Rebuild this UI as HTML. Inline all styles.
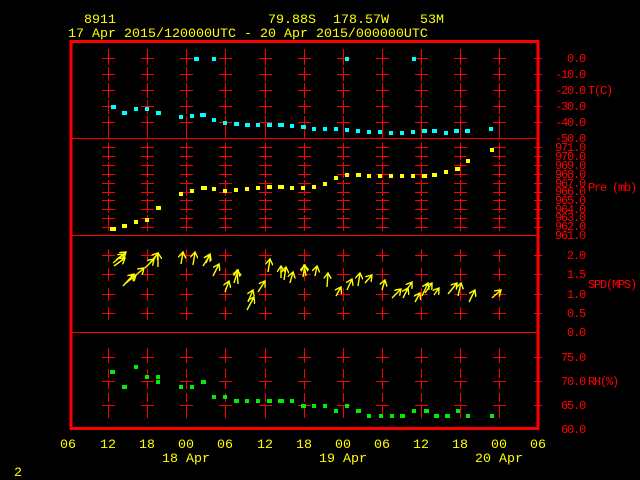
<!DOCTYPE html>
<html><head><meta charset="utf-8"><style>
html,body{margin:0;padding:0;background:#000;width:640px;height:480px;overflow:hidden}
svg{display:block}
text{font-family:"Liberation Mono","DejaVu Sans Mono",monospace}
.t{font-size:13.33px;fill:#ffff00}
.r{font-size:12px;fill:#ff0000;letter-spacing:-1.2px}
</style></head><body>
<svg width="640" height="480" viewBox="0 0 640 480" xmlns="http://www.w3.org/2000/svg">
<defs>
<g id="c1" stroke="#ff0000" stroke-width="1" shape-rendering="crispEdges">
<path d="M0.5 49V65M0.5 67V81M0.5 83V98M0.5 100V114M0.5 116V138"/>
<path d="M-6 58.5H7M-6 74.5H7M-6 90.5H7M-6 106.5H7M-6 122.5H7"/>
</g>
<g id="c2" stroke="#ff0000" stroke-width="1" shape-rendering="crispEdges">
<path d="M0.5 143V160M0.5 162V178M0.5 180V196M0.5 198V213M0.5 215V231"/>
<path d="M-6 147.5H7M-6 156.5H7M-6 165.5H7M-6 174.5H7M-6 183.5H7M-6 192.5H7M-6 200.5H7M-6 209.5H7M-6 218.5H7M-6 227.5H7"/>
</g>
<g id="c3" stroke="#ff0000" stroke-width="1" shape-rendering="crispEdges">
<path d="M0.5 249V262M0.5 268V281M0.5 288V301M0.5 307V320"/>
<path d="M-6 255.5H7M-6 274.5H7M-6 294.5H7M-6 313.5H7"/>
</g>
<g id="c4" stroke="#ff0000" stroke-width="1" shape-rendering="crispEdges">
<path d="M0.5 348V363M0.5 369V378M0.5 381V389M0.5 393V402M0.5 405V418"/>
<path d="M-6 357.5H7M-6 381.5H7M-6 405.5H7"/>
</g>
<marker id="ah" markerWidth="8" markerHeight="8" refX="6" refY="4" orient="auto" markerUnits="userSpaceOnUse">
<path d="M0 0L6 4L0 8" fill="none" stroke="#ffff00" stroke-width="1.4"/>
</marker>
</defs>

<text class="t" x="84" y="23">8911</text>
<text class="t" x="268" y="23">79.88S</text>
<text class="t" x="333" y="23">178.57W</text>
<text class="t" x="420" y="23">53M</text>
<text class="t" x="68" y="37">17 Apr 2015/120000UTC - 20 Apr 2015/000000UTC</text>

<g>
<use href="#c1" x="108"/><use href="#c1" x="147"/><use href="#c1" x="186"/><use href="#c1" x="225"/><use href="#c1" x="265"/><use href="#c1" x="304"/><use href="#c1" x="343"/><use href="#c1" x="382"/><use href="#c1" x="421"/><use href="#c1" x="460"/><use href="#c1" x="499"/>
<use href="#c2" x="108"/><use href="#c2" x="147"/><use href="#c2" x="186"/><use href="#c2" x="225"/><use href="#c2" x="265"/><use href="#c2" x="304"/><use href="#c2" x="343"/><use href="#c2" x="382"/><use href="#c2" x="421"/><use href="#c2" x="460"/><use href="#c2" x="499"/>
<use href="#c3" x="108"/><use href="#c3" x="147"/><use href="#c3" x="186"/><use href="#c3" x="225"/><use href="#c3" x="265"/><use href="#c3" x="304"/><use href="#c3" x="343"/><use href="#c3" x="382"/><use href="#c3" x="421"/><use href="#c3" x="460"/><use href="#c3" x="499"/>
<use href="#c4" x="108"/><use href="#c4" x="147"/><use href="#c4" x="186"/><use href="#c4" x="225"/><use href="#c4" x="265"/><use href="#c4" x="304"/><use href="#c4" x="343"/><use href="#c4" x="382"/><use href="#c4" x="421"/><use href="#c4" x="460"/><use href="#c4" x="499"/>
</g>

<g stroke="#ff0000" fill="none" shape-rendering="crispEdges">
<rect x="71" y="41.5" width="467" height="387" stroke-width="3"/>
<path d="M72 138.5H537M72 235.5H537M72 332.5H537" stroke-width="1"/>
<path stroke-width="1" d="M534 58.5H542M534 74.5H542M534 90.5H542M534 106.5H542M534 122.5H542M534 147.5H542M534 156.5H542M534 165.5H542M534 174.5H542M534 183.5H542M534 192.5H542M534 200.5H542M534 209.5H542M534 218.5H542M534 227.5H542M534 255.5H542M534 274.5H542M534 294.5H542M534 313.5H542M534 357.5H542M534 381.5H542M534 405.5H542"/>
</g>

<g class="r" text-anchor="end">
<text x="585" y="62">0.0</text><text x="585" y="78">-10.0</text><text x="585" y="94">-20.0</text><text x="585" y="110">-30.0</text><text x="585" y="126">-40.0</text><text x="585" y="142">-50.0</text>
<text x="585" y="151">971.0</text><text x="585" y="160">970.0</text><text x="585" y="169">969.0</text><text x="585" y="178">968.0</text><text x="585" y="187">967.0</text><text x="585" y="195">966.0</text><text x="585" y="204">965.0</text><text x="585" y="213">964.0</text><text x="585" y="221">963.0</text><text x="585" y="230">962.0</text><text x="585" y="239">961.0</text>
<text x="585" y="259">2.0</text><text x="585" y="278">1.5</text><text x="585" y="298">1.0</text><text x="585" y="317">0.5</text><text x="585" y="336">0.0</text>
<text x="585" y="361">75.0</text><text x="585" y="385">70.0</text><text x="585" y="409">65.0</text><text x="585" y="433">60.0</text>
</g>
<g class="r">
<text x="588" y="94">T(C)</text>
<text x="588" y="191">Pre (mb)</text>
<text x="588" y="288">SPD(MPS)</text>
<text x="588" y="385">RH(%)</text>
</g>

<g class="t" text-anchor="middle">
<text x="68" y="448">06</text><text x="108" y="448">12</text><text x="147" y="448">18</text><text x="186" y="448">00</text><text x="225" y="448">06</text><text x="265" y="448">12</text><text x="304" y="448">18</text><text x="343" y="448">00</text><text x="382" y="448">06</text><text x="421" y="448">12</text><text x="460" y="448">18</text><text x="499" y="448">00</text><text x="538" y="448">06</text>
<text x="186" y="462">18 Apr</text><text x="343" y="462">19 Apr</text><text x="499" y="462">20 Apr</text>
</g>
<text class="t" x="14" y="476">2</text>

<g fill="#00ffff">
<rect x="111" y="105" width="5" height="4"/><rect x="122" y="111" width="5" height="4"/><rect x="134" y="107" width="4" height="4"/><rect x="145" y="107" width="4" height="4"/><rect x="156" y="111" width="5" height="4"/><rect x="179" y="115" width="4" height="4"/><rect x="190" y="114" width="4" height="4"/><rect x="200" y="113" width="6" height="4"/><rect x="212" y="118" width="4" height="4"/><rect x="223" y="121" width="4" height="4"/><rect x="234" y="122" width="5" height="4"/><rect x="245" y="123" width="5" height="4"/><rect x="256" y="123" width="4" height="4"/><rect x="267" y="123" width="5" height="4"/><rect x="278" y="123" width="6" height="4"/><rect x="290" y="124" width="4" height="4"/><rect x="301" y="125" width="5" height="4"/><rect x="312" y="127" width="4" height="4"/><rect x="323" y="127" width="4" height="4"/><rect x="334" y="127" width="4" height="4"/><rect x="345" y="128" width="4" height="4"/><rect x="356" y="129" width="4" height="4"/><rect x="367" y="130" width="4" height="4"/><rect x="378" y="130" width="4" height="4"/><rect x="389" y="131" width="4" height="4"/><rect x="400" y="131" width="4" height="4"/><rect x="411" y="130" width="4" height="4"/><rect x="422" y="129" width="5" height="4"/><rect x="432" y="129" width="5" height="4"/><rect x="444" y="131" width="4" height="4"/><rect x="454" y="129" width="5" height="4"/><rect x="465" y="129" width="5" height="4"/><rect x="489" y="127" width="4" height="4"/>
<rect x="194" y="57" width="5" height="4"/><rect x="212" y="57" width="4" height="4"/><rect x="345" y="57" width="4" height="4"/><rect x="412" y="57" width="4" height="4"/>
</g>

<g fill="#ffff00">
<rect x="110" y="227" width="6" height="4"/><rect x="122" y="224" width="5" height="4"/><rect x="134" y="220" width="4" height="4"/><rect x="145" y="218" width="4" height="4"/><rect x="156" y="206" width="5" height="4"/><rect x="179" y="192" width="4" height="4"/><rect x="190" y="189" width="4" height="4"/><rect x="201" y="186" width="6" height="4"/><rect x="212" y="187" width="4" height="4"/><rect x="223" y="189" width="4" height="4"/><rect x="234" y="188" width="4" height="4"/><rect x="245" y="187" width="4" height="4"/><rect x="256" y="186" width="4" height="4"/><rect x="267" y="185" width="5" height="4"/><rect x="278" y="185" width="6" height="4"/><rect x="290" y="186" width="4" height="4"/><rect x="301" y="186" width="4" height="4"/><rect x="312" y="185" width="4" height="4"/><rect x="323" y="182" width="4" height="4"/><rect x="334" y="176" width="4" height="4"/><rect x="345" y="173" width="4" height="4"/><rect x="356" y="173" width="5" height="4"/><rect x="367" y="174" width="4" height="4"/><rect x="378" y="174" width="4" height="4"/><rect x="389" y="174" width="4" height="4"/><rect x="400" y="174" width="4" height="4"/><rect x="411" y="174" width="4" height="4"/><rect x="422" y="174" width="5" height="4"/><rect x="432" y="173" width="5" height="4"/><rect x="444" y="170" width="4" height="4"/><rect x="455" y="167" width="5" height="4"/><rect x="466" y="159" width="4" height="4"/><rect x="490" y="148" width="4" height="4"/>
</g>

<g fill="#00ee00">
<rect x="110" y="370" width="5" height="4"/><rect x="122" y="385" width="5" height="4"/><rect x="134" y="365" width="4" height="4"/><rect x="145" y="375" width="4" height="4"/><rect x="156" y="375" width="4" height="4"/><rect x="156" y="380" width="4" height="4"/><rect x="179" y="385" width="4" height="4"/><rect x="190" y="385" width="4" height="4"/><rect x="201" y="380" width="5" height="4"/><rect x="212" y="395" width="4" height="4"/><rect x="223" y="395" width="4" height="4"/><rect x="234" y="399" width="5" height="4"/><rect x="245" y="399" width="4" height="4"/><rect x="256" y="399" width="4" height="4"/><rect x="267" y="399" width="5" height="4"/><rect x="278" y="399" width="6" height="4"/><rect x="290" y="399" width="4" height="4"/><rect x="301" y="404" width="5" height="4"/><rect x="312" y="404" width="4" height="4"/><rect x="323" y="404" width="4" height="4"/><rect x="334" y="409" width="4" height="4"/><rect x="345" y="404" width="4" height="4"/><rect x="356" y="409" width="5" height="4"/><rect x="367" y="414" width="4" height="4"/><rect x="379" y="414" width="4" height="4"/><rect x="390" y="414" width="4" height="4"/><rect x="400" y="414" width="5" height="4"/><rect x="412" y="409" width="4" height="4"/><rect x="424" y="409" width="5" height="4"/><rect x="434" y="414" width="5" height="4"/><rect x="445" y="414" width="5" height="4"/><rect x="456" y="409" width="4" height="4"/><rect x="466" y="414" width="4" height="4"/><rect x="490" y="414" width="4" height="4"/>
</g>

<g stroke="#ffff00" stroke-width="1.4" fill="none" marker-end="url(#ah)">
<path d="M113 263L124 254"/><path d="M116 260L126 252"/><path d="M114 266L125 258"/>
<path d="M123 286L134 274"/><path d="M126 283L136 275"/><path d="M135 276L144 268"/><path d="M145 268L154 259"/><path d="M150 263L158 253"/><path d="M158 267L158 253"/>
<path d="M181 264L183 252"/><path d="M193 265L195 252"/><path d="M203 266L210 255"/><path d="M206 263L210 254"/><path d="M213 276L219 264"/><path d="M225 292L229 281"/><path d="M234 283L238 270"/><path d="M238 284L237 270"/>
<path d="M247 310L254 297"/><path d="M248 302L253 290"/><path d="M258 292L265 281"/><path d="M268 272L270 259"/><path d="M281 278L281 266"/><path d="M284 280L286 267"/><path d="M290 283L293 272"/><path d="M303 277L305 265"/><path d="M306 276L304 265"/><path d="M315 276L317 266"/><path d="M327 287L328 273"/>
<path d="M336 296L341 287"/><path d="M347 290L352 279"/><path d="M358 286L360 273"/><path d="M365 283L372 275"/><path d="M382 290L385 280"/><path d="M392 298L401 289"/><path d="M403 298L408 288"/><path d="M406 291L412 282"/><path d="M415 302L420 293"/><path d="M422 296L428 283"/><path d="M425 293L432 283"/><path d="M434 295L439 288"/><path d="M448 294L457 283"/><path d="M458 296L461 283"/><path d="M469 302L475 290"/><path d="M492 298L501 290"/>
</g>
</svg>
</body></html>
